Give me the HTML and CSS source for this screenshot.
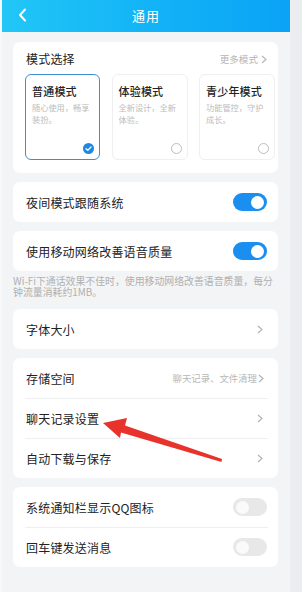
FILE: index.html
```html
<!DOCTYPE html>
<html lang="zh-CN">
<head>
<meta charset="utf-8">
<title>通用</title>
<link rel="stylesheet" href="styles.css">
</head>
<body>
<div class="screen">
  <main class="page">
    <header class="topbar">
      <svg class="back" width="10" height="14" viewBox="0 0 10 14"><polyline points="7,1.5 2,7 7,12.5" fill="none" stroke="#fff" stroke-width="2" stroke-linecap="round" stroke-linejoin="round"/></svg>
      <h1 class="title">通用</h1>
    </header>

    <section class="card modes">
      <div class="modes-head">
        <span class="modes-title">模式选择</span>
        <span class="hint">更多模式<svg class="chev" width="6" height="9" viewBox="0 0 6 9"><polyline points="1,1 5,4.5 1,8" fill="none" stroke="#b5b5b5" stroke-width="1.1"/></svg></span>
      </div>
      <div class="tiles">
        <div class="tile selected">
          <div class="tile-name">普通模式</div>
          <div class="tile-desc">随心使用，畅享装扮。</div>
          <svg class="mark" width="11" height="11" viewBox="0 0 11 11"><circle cx="5.5" cy="5.5" r="5.5" fill="#1e88e0"/><polyline points="3,5.7 4.8,7.4 8,4" fill="none" stroke="#fff" stroke-width="1.3" stroke-linecap="round" stroke-linejoin="round"/></svg>
        </div>
        <div class="tile">
          <div class="tile-name">体验模式</div>
          <div class="tile-desc">全新设计，全新体验。</div>
          <svg class="mark" width="11" height="11" viewBox="0 0 11 11"><circle cx="5.5" cy="5.5" r="5" fill="#fff" stroke="#bdbdbd" stroke-width="1"/></svg>
        </div>
        <div class="tile">
          <div class="tile-name">青少年模式</div>
          <div class="tile-desc">功能管控，守护成长。</div>
          <svg class="mark" width="11" height="11" viewBox="0 0 11 11"><circle cx="5.5" cy="5.5" r="5" fill="#fff" stroke="#bdbdbd" stroke-width="1"/></svg>
        </div>
      </div>
    </section>

    <section class="card">
      <div class="row"><span class="label">夜间模式跟随系统</span><span class="switch on"></span></div>
    </section>

    <section class="card">
      <div class="row"><span class="label">使用移动网络改善语音质量</span><span class="switch on"></span></div>
    </section>
    <p class="note">Wi-Fi下通话效果不佳时，使用移动网络改善语音质量，每分钟流量消耗约1MB。</p>

    <section class="card">
      <div class="row"><span class="label">字体大小</span><svg class="chev row-chev" width="6" height="9" viewBox="0 0 6 9"><polyline points="1,1 5,4.5 1,8" fill="none" stroke="#b0b0b0" stroke-width="1.1"/></svg></div>
    </section>

    <section class="card">
      <div class="row"><span class="label">存储空间</span><span class="hint">聊天记录、文件清理<svg class="chev" width="6" height="9" viewBox="0 0 6 9"><polyline points="1,1 5,4.5 1,8" fill="none" stroke="#b0b0b0" stroke-width="1.1"/></svg></span></div>
      <div class="row"><span class="label">聊天记录设置</span><svg class="chev row-chev" width="6" height="9" viewBox="0 0 6 9"><polyline points="1,1 5,4.5 1,8" fill="none" stroke="#b0b0b0" stroke-width="1.1"/></svg></div>
      <div class="row"><span class="label">自动下载与保存</span><svg class="chev row-chev" width="6" height="9" viewBox="0 0 6 9"><polyline points="1,1 5,4.5 1,8" fill="none" stroke="#b0b0b0" stroke-width="1.1"/></svg></div>
    </section>

    <section class="card">
      <div class="row"><span class="label">系统通知栏显示QQ图标</span><span class="switch"></span></div>
      <div class="row"><span class="label">回车键发送消息</span><span class="switch"></span></div>
    </section>
  </main>
  <div class="edge"></div>
  <svg class="arrow" width="302" height="592" viewBox="0 0 302 592"><polygon points="103,423 127,418 125,425.5 222,459 221.5,462 121,432.5 120,438" fill="#e8332c"/></svg>
</div>
</body>
</html>
```

FILE: styles.css
```css
* { box-sizing: border-box; margin: 0; padding: 0; }
html, body { width: 302px; height: 592px; overflow: hidden; }
body {
  font-family: "Noto Sans CJK SC", "Noto Sans", sans-serif;
  background: #ebedf0;
  color: #222;
}
.screen {
  position: relative;
  display: flex;
  width: 302px;
  height: 592px;
}
.page {
  width: 290px;
  height: 592px;
  background: #f3f4f6;
  border-left: 2px solid #f7f8f9;
}
.edge { flex: 1; background: #ebedf0; }
.topbar {
  height: 32px;
  background: linear-gradient(90deg, #22c6f6 0%, #12b2f6 55%, #0aa3f6 100%);
  display: flex;
  align-items: center;
  justify-content: center;
  position: relative;
}
.back { position: absolute; left: 16px; top: 8px; }
.title {
  font-size: 13px;
  font-weight: 400;
  color: #fff;
  line-height: 16px;
  letter-spacing: 1px;
}
.card {
  background: #fff;
  border-radius: 7px;
  margin: 9px 12px 0 11px;
}
.modes { margin-top: 10px; padding: 10px 3px 13px 12px; }
.modes-head {
  display: flex;
  justify-content: space-between;
  align-items: center;
  height: 14px;
  padding: 0 8px 0 1px;
}
.modes-title { font-size: 12px; line-height: 14px; color: #222; letter-spacing: 0.2px; }
.hint {
  display: flex;
  align-items: center;
  gap: 3px;
  font-size: 9.6px;
  color: #b5b5b5;
}
.tiles {
  display: grid;
  grid-template-columns: 75px 76px 76px;
  column-gap: 11.5px;
  margin-top: 8px;
}
.tile {
  height: 86px;
  border: 1px solid #efefef;
  border-radius: 6px;
  padding: 8px 5px 5px 6px;
  display: flex;
  flex-direction: column;
}
.tile.selected { border: 1.3px solid #3c8fcd; }
.tile-name { font-size: 11px; line-height: 16px; color: #222; font-weight: 500; letter-spacing: 0.2px; }
.tile-desc {
  font-size: 8.2px;
  line-height: 12px;
  margin-top: 2px;
  color: #bcbcbc;
}
.mark { margin-top: auto; align-self: flex-end; }
.row {
  height: 40px;
  display: flex;
  align-items: center;
  justify-content: space-between;
  padding: 0 11px 0 13px;
}
.row + .row {
  background: linear-gradient(#efefef, #efefef) no-repeat 12px 0 / calc(100% - 22px) 1px;
}
.label { font-size: 12px; color: #222; letter-spacing: 0.2px; }
.row .hint { margin-right: 3px; font-size: 9.4px; color: #b8b8b8; gap: 1px; }
.row-chev { margin-right: 4px; }
.switch {
  width: 34px;
  height: 18px;
  border-radius: 9px;
  background: #e8e8e8;
  position: relative;
}
.switch::after {
  content: "";
  position: absolute;
  top: 2.5px;
  left: 3px;
  width: 13px;
  height: 13px;
  border-radius: 50%;
  background: #fafafa;
}
.switch.on { background: #1b8ff0; }
.switch.on::after { left: auto; right: 3px; background: #fff; }
.note {
  font-size: 9.9px;
  line-height: 11px;
  color: #b0b0b0;
  padding: 5px 10px 0 11px;
  height: 38px;
}
.note + .card { margin-top: 0; }
.arrow { position: absolute; left: 0; top: 0; pointer-events: none; }
```
